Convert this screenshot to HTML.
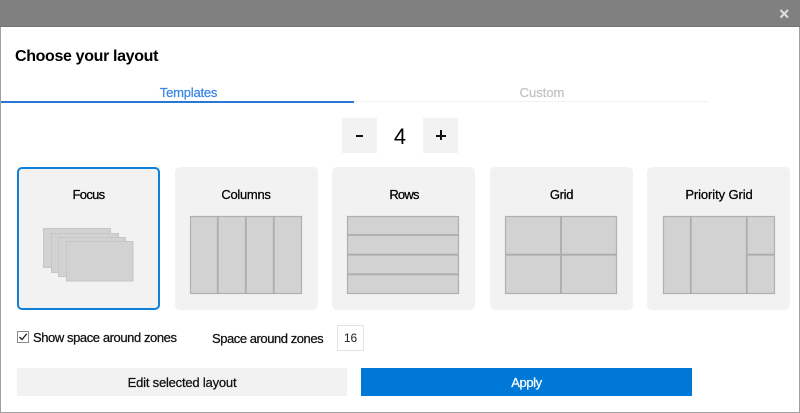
<!DOCTYPE html>
<html>
<head>
<meta charset="utf-8">
<style>
html,body{margin:0;padding:0;background:#fff}
body{width:800px;height:413px;position:relative;overflow:hidden;font-family:"Liberation Sans",sans-serif;color:#000}
.a{position:absolute}
.t{position:absolute;white-space:nowrap;transform:translateX(-50%);text-align:center;line-height:20px}
.s{-webkit-text-stroke:.25px currentColor}
.card{position:absolute;top:167px;width:143px;height:143px;background:#f2f2f2;border-radius:5px;box-sizing:border-box}
</style>
</head>
<body>
<div class="a" style="left:0;top:0;width:800px;height:27px;background:#808080"></div>
<div class="a" style="left:0;top:26px;width:800px;height:1px;background:#757575"></div>
<div class="a" style="left:0;top:27px;width:1px;height:386px;background:#a0a0a0"></div>
<div class="a" style="left:799px;top:27px;width:1px;height:386px;background:#a0a0a0"></div>
<div class="a" style="left:0;top:412px;width:800px;height:1px;background:#a0a0a0"></div>
<svg class="a" style="left:778px;top:8px" width="13" height="13" viewBox="0 0 13 13"><path d="M2.500 2L10 9.500M10 2L2.500 9.500" stroke="#dcdcdc" stroke-width="2.200" fill="none"/></svg>

<div class="a" style="left:15px;top:47px;font-size:16px;font-weight:bold;line-height:20px;white-space:nowrap;letter-spacing:-.35px">Choose your layout</div>

<div class="a" style="left:354px;top:101px;width:354px;height:1px;background:#f2f2f2"></div>
<div class="a" style="left:1px;top:101px;width:353px;height:2px;background:#2a78d6"></div>
<div class="t s" style="left:188.500px;top:83px;font-size:13px;color:#3a85e6;letter-spacing:-.2px">Templates</div>
<div class="t s" style="left:542px;top:83px;font-size:13px;color:#c4c4c4">Custom</div>

<div class="a" style="left:342px;top:118px;width:35px;height:35px;background:#f2f2f2"></div>
<div class="a" style="left:356px;top:135px;width:7px;height:2px;background:#111"></div>
<div class="t" style="left:400px;top:127px;font-size:22px">4</div>
<div class="a" style="left:423px;top:118px;width:35px;height:35px;background:#f2f2f2"></div>
<div class="a" style="left:436px;top:135px;width:10px;height:1.500px;background:#111"></div>
<div class="a" style="left:440.300px;top:130px;width:1.500px;height:10px;background:#111"></div>

<div class="card" style="left:17px;border:2px solid #0f80da"></div>
<div class="card" style="left:175px"></div>
<div class="card" style="left:332px"></div>
<div class="card" style="left:490px"></div>
<div class="card" style="left:647px"></div>
<div class="t s" style="left:88.500px;top:185px;font-size:13px;letter-spacing:-.7px">Focus</div>
<div class="t s" style="left:246px;top:185px;font-size:13px;letter-spacing:-.3px">Columns</div>
<div class="t s" style="left:404px;top:185px;font-size:13px;letter-spacing:-.8px">Rows</div>
<div class="t s" style="left:561.500px;top:185px;font-size:13px;letter-spacing:-.3px">Grid</div>
<div class="t s" style="left:719px;top:185px;font-size:13px;letter-spacing:-.1px">Priority Grid</div>

<svg class="a" style="left:0;top:160px" width="800" height="160" viewBox="0 160 800 160">
<g fill="#d2d2d2" stroke="#c6c6c6" stroke-width="1">
<rect x="43.500" y="228.500" width="67" height="39"/>
<rect x="51.500" y="233.500" width="67" height="39"/>
<rect x="58.500" y="237.500" width="67" height="39"/>
<rect x="66.500" y="241.500" width="66.500" height="39.500"/>
</g>
<g fill="#d2d2d2" stroke="#b0b0b0" stroke-width="1.200">
<rect x="190.500" y="216.500" width="111" height="77"/>
<rect x="347.500" y="216.500" width="111" height="77"/>
<rect x="505.500" y="216.500" width="111" height="77"/>
<rect x="663.500" y="216.500" width="111" height="77"/>
</g>
<g stroke="#acacac" stroke-width="1.800" fill="none">
<path d="M217.800 216V294M245.800 216V294M273.800 216V294"/>
<path d="M347 235H459M347 254.700H459M347 274.300H459"/>
<path d="M561 216V294M505 254.700H617"/>
<path d="M690.800 216V294M746.800 216V294M746.800 254.700H775"/>
</g>
</svg>

<svg class="a" style="left:17px;top:331px" width="12" height="12" viewBox="0 0 12 12"><rect x=".5" y=".5" width="11" height="11" fill="#fff" stroke="#8a8a8a"/><path d="M2.500 6L5 8.500L9.700 2.800" fill="none" stroke="#222" stroke-width="1.300"/></svg>
<div class="a s" style="left:33px;top:328px;font-size:13px;line-height:20px;white-space:nowrap;color:#111;letter-spacing:-.42px">Show space around zones</div>
<div class="a s" style="left:212px;top:329px;font-size:13px;line-height:20px;white-space:nowrap;color:#111;letter-spacing:-.45px">Space around zones</div>
<div class="a" style="left:337px;top:325px;width:27px;height:26px;box-sizing:border-box;border:1px solid #e2e2e2;background:#fff;font-size:12px;line-height:25px;text-align:center;color:#222">16</div>

<div class="a s" style="left:17px;top:368px;width:330px;height:28px;background:#f2f2f2;font-size:13px;line-height:29px;text-align:center;color:#111;letter-spacing:-.2px">Edit selected layout</div>
<div class="a s" style="left:361px;top:368px;width:331px;height:28px;background:#0078d7;font-size:13px;line-height:29px;text-align:center;color:#fff;letter-spacing:-.4px">Apply</div>
</body>
</html>
